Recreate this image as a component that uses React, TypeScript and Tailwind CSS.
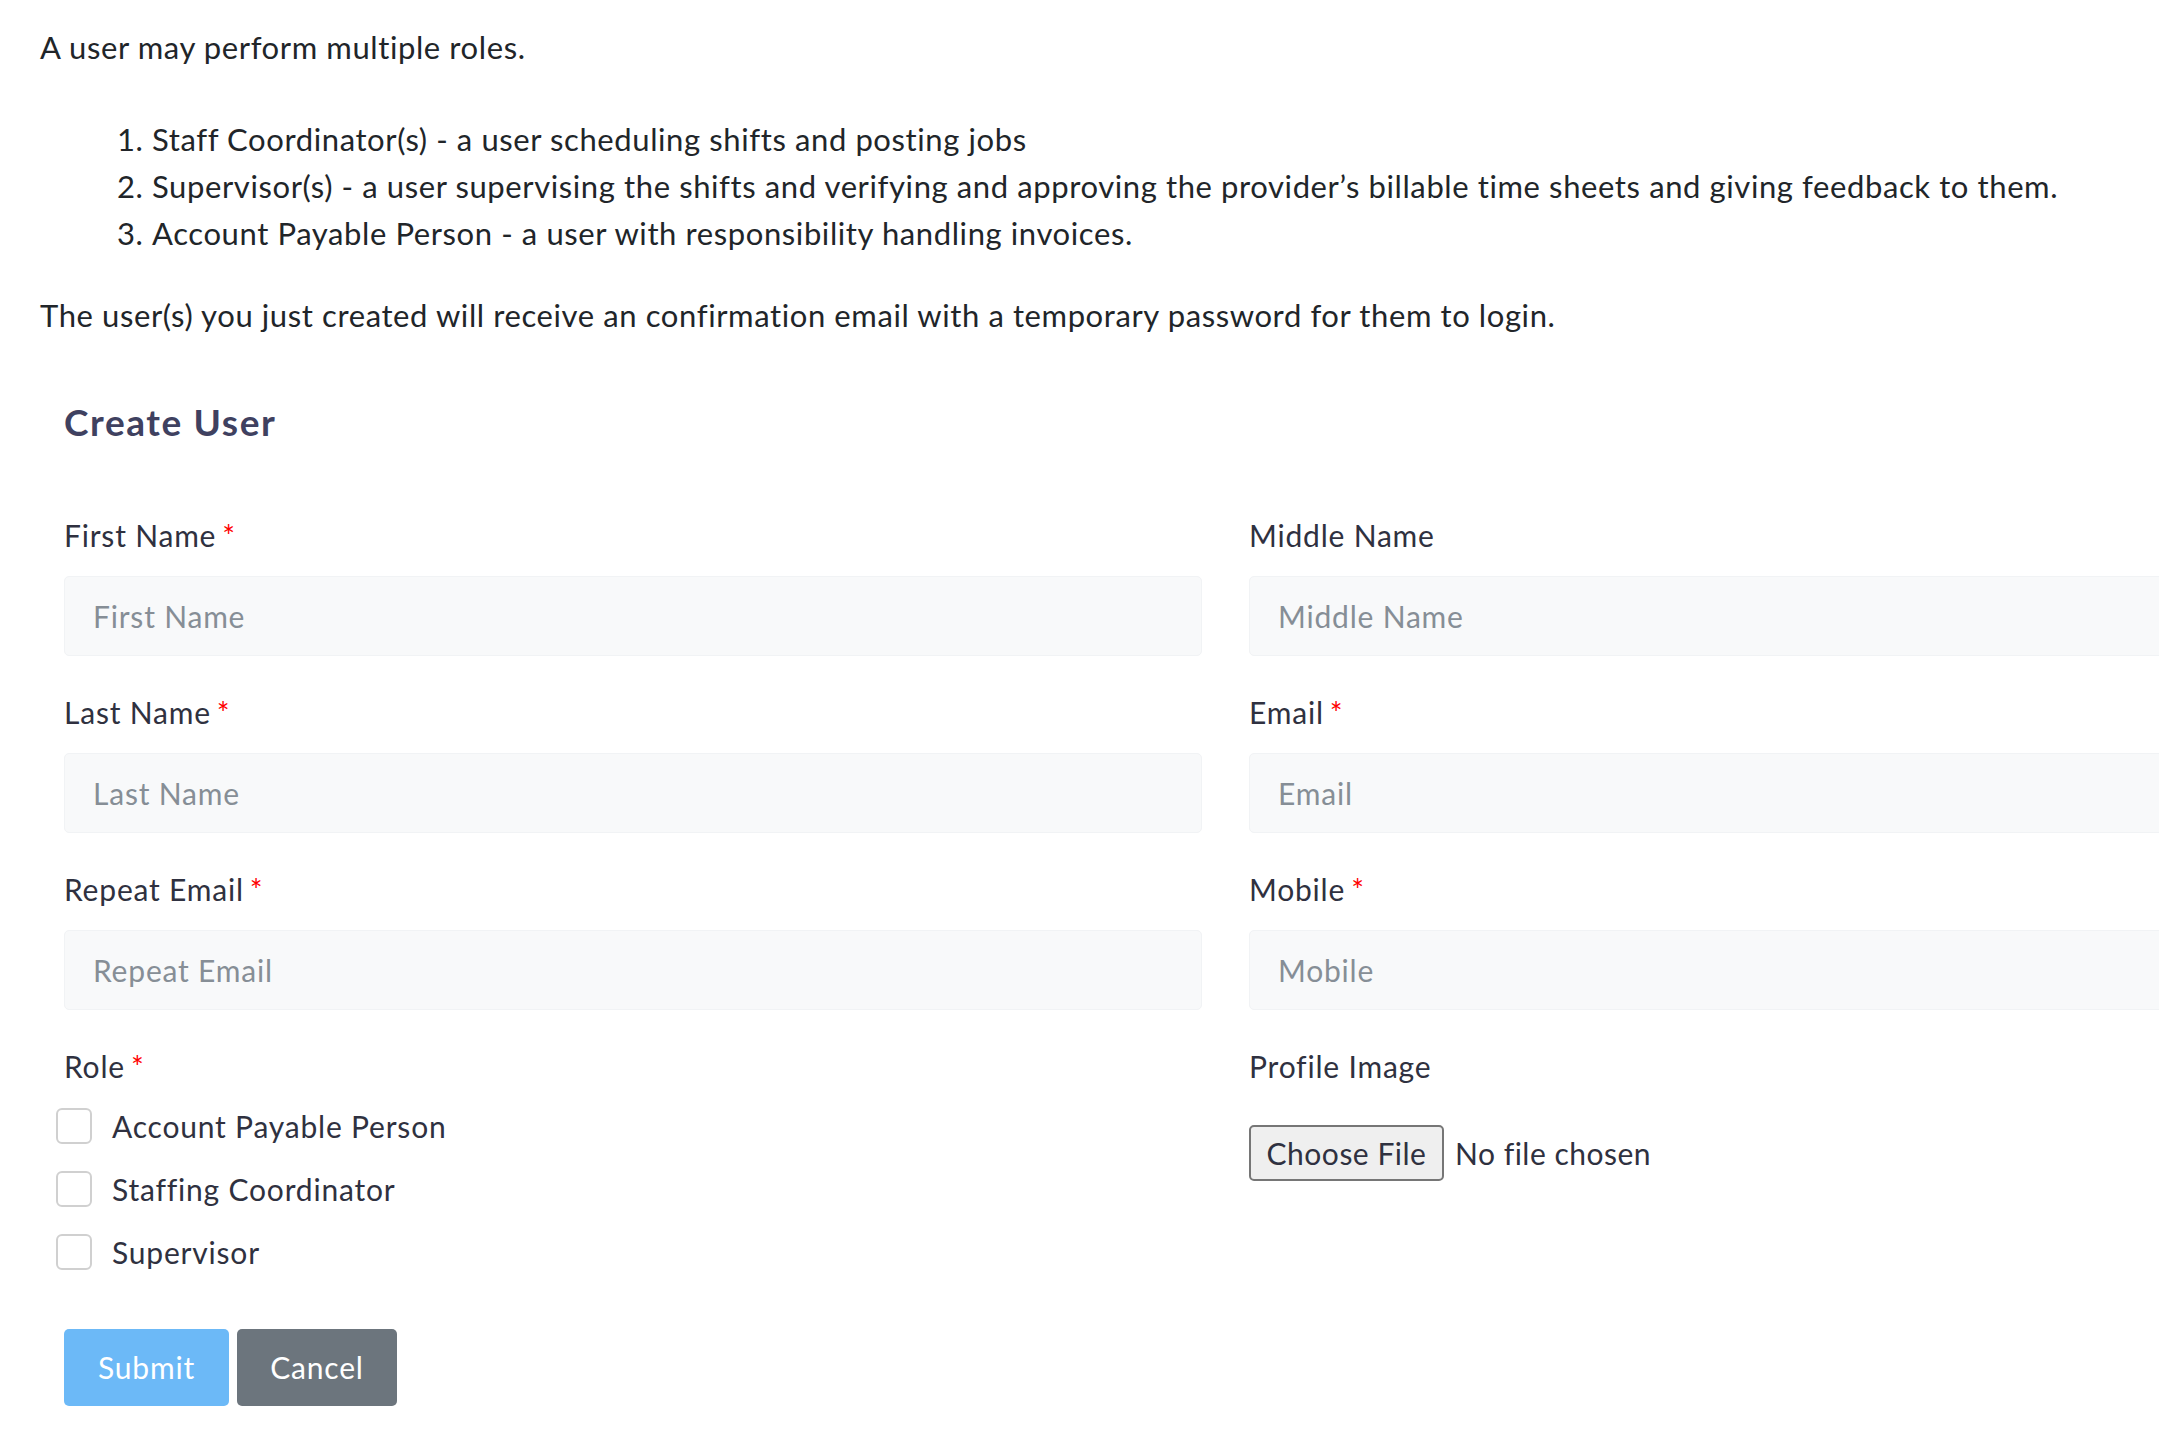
import React from 'react';

const roles = ['Account Payable Person', 'Staffing Coordinator', 'Supervisor'];

const Label: React.FC<{ text: string; required?: boolean }> = ({ text, required }) => (
  <label className="block h-[36px] text-[30px] leading-[36px] tracking-[0.8px] text-[#2f3140]">
    {text}
    {required && <span className="ml-[6px] text-[#ff0000]">*</span>}
  </label>
);

const Field: React.FC<{ label: string; required?: boolean }> = ({ label, required }) => (
  <div>
    <Label text={label} required={required} />
    <input
      type="text"
      placeholder={label}
      className="mt-[23px] block h-[80px] w-full rounded-[5px] border border-[#f1f3f5] bg-[#f8f9fa] px-[28px] text-[30px] tracking-[0.8px] text-[#495057] placeholder:text-[#868e96] outline-none"
    />
  </div>
);

export default function App() {
  return (
    <div className="w-[2159px] overflow-hidden bg-white font-['Lato',sans-serif] text-[#212529]">
      <div className="px-[40px] pt-[24px] text-[31px] leading-[47px] tracking-[0.6px]">
        <p>A user may perform multiple roles.</p>
        <ol className="mt-[45px] list-decimal pl-[112px]">
          <li>Staff Coordinator(s) - a user scheduling shifts and posting jobs</li>
          <li>Supervisor(s) - a user supervising the shifts and verifying and approving the provider’s billable time sheets and giving feedback to them.</li>
          <li>Account Payable Person - a user with responsibility handling invoices.</li>
        </ol>
        <p className="mt-[35px]">
          The user(s) you just created will receive an confirmation email with a temporary password for them to login.
        </p>
      </div>

      <div className="pl-[64px] pt-[63px]">
        <h2 className="text-[37px] font-bold leading-[40px] tracking-[1.6px] text-[#3f4160]">Create User</h2>

        <div className="mt-[75px] grid w-[2323px] grid-cols-[1138px_1138px] gap-x-[47px] gap-y-[38px]">
          <Field label="First Name" required />
          <Field label="Middle Name" />
          <Field label="Last Name" required />
          <Field label="Email" required />
          <Field label="Repeat Email" required />
          <Field label="Mobile" required />

          <div>
            <Label text="Role" required />
            <div className="mt-[24px] -ml-[8px] flex flex-col gap-[27px]">
              {roles.map((r) => (
                <label key={r} className="flex h-[36px] items-center gap-[20px] text-[30px] tracking-[0.8px] text-[#2f3140]">
                  <input
                    type="checkbox"
                    className="h-[36px] w-[36px] shrink-0 appearance-none rounded-[6px] border-2 border-[#d0d0d0] bg-white"
                  />
                  <span>{r}</span>
                </label>
              ))}
            </div>
          </div>

          <div>
            <Label text="Profile Image" />
            <div className="mt-[41px] flex items-center gap-[11px] text-[30px] tracking-[0.5px] text-[#2f3140]">
              <button className="h-[56px] w-[195px] rounded-[5px] border-2 border-[#767676] bg-[#efefef] text-[30px] tracking-[0.5px] text-[#2f3140]">
                Choose File
              </button>
              <span>No file chosen</span>
            </div>
          </div>
        </div>

        <div className="mt-[59px] flex gap-[8px] pb-[43px] text-[30px] tracking-[0.8px] text-white">
          <button className="h-[77px] w-[165px] rounded-[5px] bg-[#6cb9f7]">Submit</button>
          <button className="h-[77px] w-[160px] rounded-[5px] bg-[#6c757d]">Cancel</button>
        </div>
      </div>
    </div>
  );
}
